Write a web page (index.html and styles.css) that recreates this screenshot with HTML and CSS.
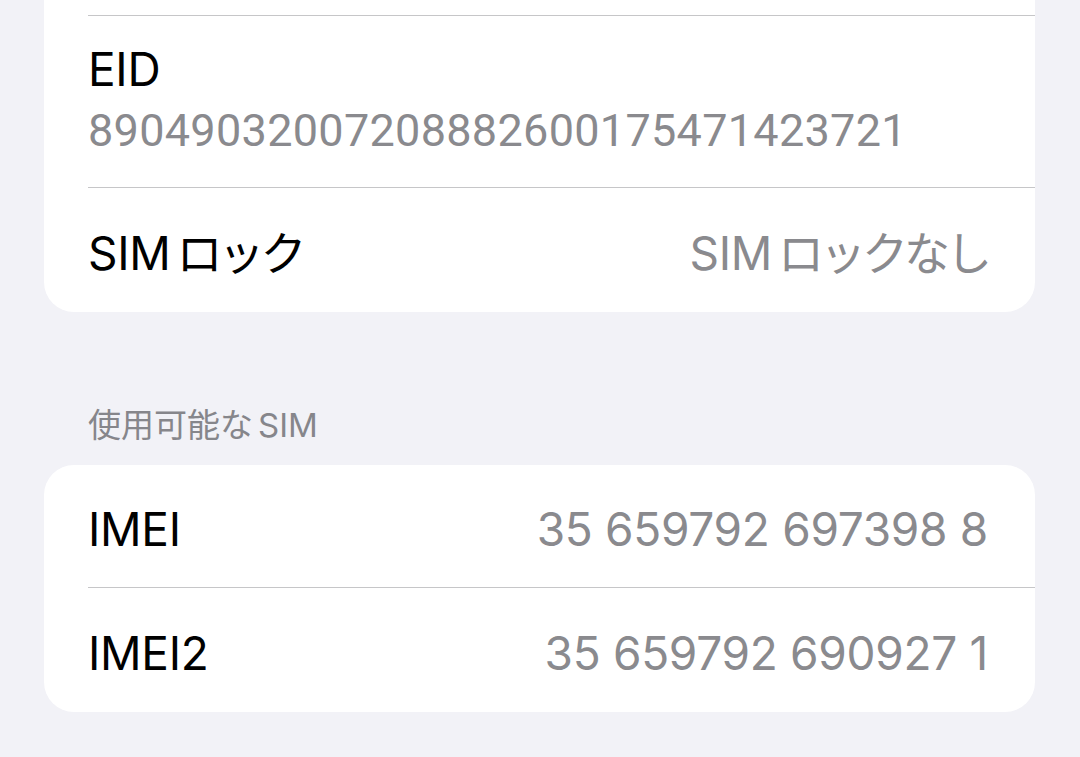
FILE: index.html
```html
<!DOCTYPE html>
<html lang="ja">
<head>
    <meta charset="UTF-8">
    <meta name="viewport" content="width=device-width, initial-scale=1.0">
    <title>情報</title>
    <link rel="stylesheet" href="styles.css">
</head>
<body>
    <div class="group group-top">
        <div class="row row-stub"></div>
        <div class="row row-stack">
            <div class="label">EID</div>
            <div class="value mono">89049032007208882600175471423721</div>
        </div>
        <div class="row">
            <div class="label">SIM<span class="jp">ロック</span></div>
            <div class="value">SIM<span class="jp">ロックなし</span></div>
        </div>
    </div>

    <div class="section-header">使用可能な<span class="jp-sim">SIM</span></div>
    <div class="group">
        <div class="row">
            <div class="label">IMEI</div>
            <div class="value">35 659792 697398 8</div>
        </div>
        <div class="row">
            <div class="label">IMEI2</div>
            <div class="value">35 659792 690927 1</div>
        </div>
    </div>
</body>
</html>
```

FILE: styles.css
```css
body {
    margin: 0;
    padding: 0;
    background: #f2f2f7;
    font-family: 'Inter', 'Noto Sans CJK JP', sans-serif;
    color: #000;
}

.group {
    background: #fff;
    border-radius: 30px;
    margin: 0 45px 0 44px;
    overflow: hidden;
}

.group-top {
    border-top-left-radius: 0;
    border-top-right-radius: 0;
}

.row {
    box-sizing: border-box;
    margin-left: 44px;
    padding: 5px 47px 0 0;
    height: 123px;
    display: flex;
    align-items: center;
    justify-content: space-between;
    border-bottom: 1px solid #c6c6c8;
}

.row:last-child {
    border-bottom: none;
    height: 124px;
}

.row-stub {
    height: 16px;
    padding: 0;
}

.row-stack {
    height: 172px;
    flex-direction: column;
    align-items: flex-start;
    justify-content: flex-start;
    padding-top: 25px;
}

.label {
    font-size: 46px;
    line-height: 56px;
    letter-spacing: -0.3px;
}

.value {
    font-size: 46px;
    line-height: 56px;
    color: #8a8a8e;
    letter-spacing: -0.3px;
}

.jp {
    margin-left: 6px;
    letter-spacing: -4px;
}

.mono {
    font-family: 'Roboto', sans-serif;
    font-size: 45px;
    line-height: 68px;
    letter-spacing: 0.3px;
}

.section-header {
    font-size: 33px;
    line-height: 36px;
    color: #86868b;
    padding: 95px 0 22px 88px;
}

.jp-sim {
    margin-left: 5px;
}
```
